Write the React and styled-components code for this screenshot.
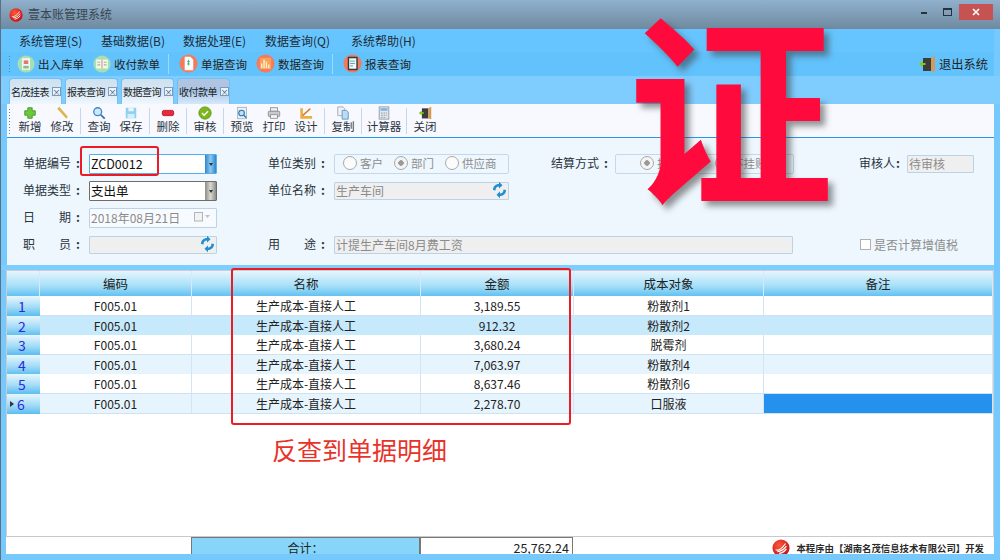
import styled, { createGlobalStyle } from 'styled-components';

const GlobalStyle = createGlobalStyle`
html, body {
  margin: 0;
  padding: 0;
  background: #6ac6fd;
}
* {
  box-sizing: border-box;
}
`;

const Window = styled.div`
position: relative;
width: 1000px;
height: 560px;
overflow: hidden;
display: flex;
flex-direction: column;
background: #75c9fd;
border-left: 1px solid #5d6f80;
font-family: "Noto Sans CJK SC", "Noto Sans", sans-serif;
font-size: 12px;
color: #222;
`;

const TitleBar = styled.div`
height: 29px;
flex: none;
display: flex;
align-items: center;
padding: 0 7px 0 8px;
background: linear-gradient(#8fb0cc, #6f8aa0);
`;
const TitleText = styled.div`
margin-left: 5px;
padding-bottom: 2px;
font-size: 12px;
color: #3a4650;
flex: 1;
`;
const WinButton = styled.div`
width: ${props => props.$wide ? '34px' : '23px'};
height: 16px;
display: flex;
align-items: center;
justify-content: center;
background: ${props => props.$wide ? '#c75252' : 'transparent'};
color: #fff;
margin-top: -5px;
`;

const MenuBar = styled.div`
height: 23px;
flex: none;
display: flex;
align-items: center;
padding-left: 18px;
margin-right: 6px;
background: #66c5fe;
font-size: 12px;
color: #1d2b36;
`;
const MenuItem = styled.div`
width: ${props => props.$w}px;
flex: none;
`;

const QuickBar = styled.div`
height: 24px;
flex: none;
display: flex;
align-items: center;
padding-left: 7px;
padding-bottom: 1px;
margin-right: 6px;
background: #62c2fc;
`;
const Grip = styled.div`
width: 3px;
height: ${props => props.$h || 18}px;
margin-right: ${props => props.$mr || 6}px;
background: radial-gradient(circle, #4d86b5 40%, transparent 45%) 0 0 / 3px 3px;
flex: none;
`;
const QuickItem = styled.div`
display: flex;
align-items: center;
gap: 3px;
margin-right: 9px;
font-size: 11.5px;
white-space: nowrap;
`;
const ExitItem = styled(QuickItem)`
margin-right: 6px;
font-size: 12.25px;
`;
const QuickSep = styled.div`
width: 1px;
height: 20px;
margin: 0 10px 0 -1px;
background: #9ed8fb;
`;
const QuickSpacer = styled.div`
flex: 1;
`;

const TabStrip = styled.div`
height: 28px;
flex: none;
display: flex;
align-items: flex-end;
gap: 3px;
padding-left: 8px;
background: #7fcdff;
`;
const Tab = styled.div`
width: 53px;
height: 26px;
display: flex;
align-items: center;
padding: 0 0 0 1px;
font-size: 10px;
letter-spacing: -0.5px;
white-space: nowrap;
border: 1px solid #6fc0f5;
border-bottom: none;
border-radius: 4px 4px 0 0;
background: ${props => props.$active
    ? 'linear-gradient(#b3c4de, #a9c6e6 45%, #d4e8fb)'
    : 'linear-gradient(#cfe0ef, #d6e8f6 50%, #f1f7fd)'};
`;
const TabClose = styled.span`
width: 9px;
height: 9px;
flex: none;
margin-left: 3px;
display: flex;
align-items: center;
justify-content: center;
border: 1px solid #7d9ab8;
background: #eaf3fb;
color: #33526e;
font-size: 8px;
letter-spacing: 0;
line-height: 1;
`;

const ActionBar = styled.div`
height: 33px;
flex: none;
margin: 0 6px 0 6px;
display: flex;
align-items: center;
padding-left: 1px;
background: #f7f9fe;
`;
const ActionButton = styled.div`
width: ${props => props.$w || 32}px;
height: 33px;
flex: none;
display: flex;
flex-direction: column;
align-items: center;
justify-content: flex-start;
padding-top: 2px;
font-size: 11.5px;
line-height: 12px;
color: #2b3440;
& > svg {
  width: 14px;
  height: 14px;
  flex: none;
}
`;
const ActionSep = styled.div`
width: 1px;
height: 26px;
margin: 0 2px;
flex: none;
background: #c5d8ea;
`;

const FormPanel = styled.div`
height: 128px;
flex: none;
margin: 0 6px;
padding: 12px 0 0 16px;
border-top: 1px solid #2a94ee;
background: #eef7fe;
display: grid;
grid-template-columns: 245px 283px 308px 1fr;
grid-auto-rows: 27px;
`;
const Field = styled.div`
display: flex;
align-items: center;
grid-column: ${props => props.$span ? `span ${props.$span}` : 'auto'};
`;
const Label = styled.div`
width: ${props => props.$w || 66}px;
flex: none;
padding-bottom: 2px;
font-size: 12px;
color: #2a333c;
display: flex;
white-space: nowrap;
&::after {
  content: ":";
  margin-left: ${props => props.$colon ?? 5}px;
  font-weight: 700;
}
`;
const LabelText = styled.div`
width: ${props => props.$w || 48}px;
display: flex;
justify-content: space-between;
`;
const Input = styled.div`
width: ${props => props.$w}px;
height: ${props => props.$h || 20}px;
flex: none;
display: flex;
align-items: center;
justify-content: space-between;
padding: 0 0 1px 1px;
font-size: ${props => props.$size || 12}px;
color: ${props => props.$active ? '#111' : '#8b8b8b'};
background: ${props => props.$active ? '#fff' : props.$plain ? '#f7fbff' : '#efefef'};
border: 1px solid ${props => props.$dark ? '#6d6d6d' : props.$blue ? '#58aeea' : '#bcd2e6'};
border-radius: 1px;
white-space: nowrap;
`;
const DropArrow = styled.div`
width: 11px;
align-self: stretch;
margin-bottom: -1px;
flex: none;
display: flex;
align-items: center;
justify-content: center;
background: ${props => props.$gray
    ? 'linear-gradient(90deg, #8d8d85, #d8d8d0 50%, #8d8d85)'
    : 'linear-gradient(90deg, #2d86c8, #8cc8f0 50%, #2d86c8)'};
&::after {
  content: "";
  border: 2.5px solid transparent;
  border-top: 3px solid #1c3850;
  margin-top: 3px;
}
`;
const RadioBox = styled.div`
width: ${props => props.$w}px;
height: 20px;
flex: none;
display: flex;
align-items: center;
gap: ${props => props.$gap}px;
padding-left: ${props => props.$pl}px;
padding-bottom: 1px;
border: 1px solid #c3d8ea;
border-radius: 2px;
font-size: 11.5px;
color: #8d8d8d;
`;
const Radio = styled.div`
display: flex;
align-items: center;
gap: 3px;
white-space: nowrap;
&::before {
  content: "";
  width: 12px;
  height: 12px;
  border-radius: 50%;
  border: 1px solid #a9a9a9;
  background: ${props => props.$on ? 'radial-gradient(circle, #9a9a9a 2.5px, #f4f4f4 3px)' : '#fbfbfb'};
}
`;
const CheckRow = styled.div`
display: flex;
align-items: center;
gap: 3px;
padding: 0 0 1px 1px;
color: #8d8d8d;
font-size: 12px;
`;
const CheckBox = styled.span`
width: 11px;
height: 11px;
border: 1px solid #b0b0b0;
background: #fff;
`;

const Splitter = styled.div`
height: 5px;
flex: none;
margin-right: 6px;
background: #7fcdff;
`;

const GridWrap = styled.div`
height: 266px;
flex: none;
margin: 0 6px 0 5px;
display: flex;
flex-direction: column;
background: #fff;
border: 1px solid #c8cdd6;
border-bottom: none;
`;
const Row = styled.div`
display: grid;
grid-template-columns: 33px 152px 229px 153px 190px 1fr;
height: ${props => props.$head ? '25px' : '19.5px'};
flex: none;
font-size: ${props => props.$head ? 12.5 : 12}px;
color: #222;
background: ${props => props.$bg || 'transparent'};
`;
const HeadCell = styled.div`
display: flex;
align-items: center;
justify-content: center;
background: linear-gradient(#e6f6fd, #a6dff8 60%, #62c2f2);
border-right: 1px solid #d3eafa;
`;
const Cell = styled.div`
display: flex;
align-items: center;
justify-content: center;
border-right: 1px solid #d3e4f4;
border-bottom: 1px solid #cfe2f4;
background: ${props => props.$selected ? '#2491ee' : 'transparent'};
white-space: nowrap;
`;
const RowNum = styled.div`
display: flex;
align-items: center;
padding-left: 11px;
font-size: 14px;
color: #2a2be0;
background: linear-gradient(#e8f7fd, #a4dcf7 55%, #5bbdf0);
`;
const RowPointer = styled.span`
width: 0;
height: 0;
margin: 0 3px 0 -8px;
border: 3px solid transparent;
border-left: 4px solid #333;
border-right: none;
`;

const Footer = styled.div`
height: 18px;
flex: none;
margin: 0 6px 0 5px;
display: grid;
grid-template-columns: 185px 229px 153px 1fr;
background: #fff;
border-top: 1px solid #c8c8d0;
`;
const FootCell = styled.div`
display: flex;
align-items: center;
justify-content: ${props => props.$end ? 'flex-end' : 'center'};
padding-right: ${props => props.$end ? '3px' : '0'};
background: ${props => props.$fill ? '#87d6fa' : '#fff'};
border: ${props => props.$box ? '1px solid #777' : 'none'};
border-bottom: ${props => props.$box ? '1px solid #bbb' : 'none'};
font-size: ${props => props.$end ? 12.5 : 12}px;
`;
const Credit = styled.div`
display: flex;
align-items: center;
justify-content: flex-end;
gap: 6px;
padding-right: 10px;
font-family: "Liberation Serif", "Noto Sans CJK SC", serif;
font-size: 9.4px;
font-weight: 700;
white-space: nowrap;
color: #2a2a2a;
`;

const BottomFill = styled.div`
flex: 1;
background: #75c9fd;
`;

const BigChar = styled.div`
position: absolute;
left: 625px;
top: 0;
width: 210px;
text-align: center;
font-size: 206px;
line-height: 200px;
font-weight: 700;
color: #ff0a3c;
text-shadow: 5px 5px 6px rgba(60, 60, 60, 0.55);
`;
const RedBox = styled.div`
position: absolute;
left: ${props => props.$x}px;
top: ${props => props.$y}px;
width: ${props => props.$w}px;
height: ${props => props.$h}px;
border: 2px solid #ec1c24;
border-radius: 3px;
`;
const Note = styled.div`
position: absolute;
left: 271px;
top: 431px;
font-size: 25px;
line-height: 36px;
color: #e8332a;
white-space: nowrap;
`;

const Logo = ({ size = 18 }) => (
  <svg width={size} height={size} viewBox="0 0 20 20">
    <defs>
      <radialGradient id="lg" cx="40%" cy="35%" r="70%">
        <stop offset="0" stopColor="#ff5a3c" />
        <stop offset="1" stopColor="#c40d12" />
      </radialGradient>
    </defs>
    <circle cx="10" cy="10" r="9.5" fill="url(#lg)" />
    <path d="M4 12c3 1 7-1 11-7M6 14c3 0 7-2 10-6M8 16c3-.5 6-2 8-5" stroke="#fff" strokeWidth="1.3" fill="none" />
  </svg>
);

const Quick = ({ kind }) => {
  const green = kind === 'stock' || kind === 'pay';
  const size = green ? 18 : 19;
  return (
    <svg width={size} height={size} viewBox="0 0 20 20">
      <circle cx="10" cy="10" r="9.5" fill={green ? '#a6dfb2' : '#f47a5c'} />
      {kind === 'stock' && <>
        <rect x="5.5" y="3.5" width="9" height="13" fill="#f2f4f2" />
        <rect x="7.5" y="6" width="5" height="4" fill="#e2786a" />
        <rect x="7" y="12" width="6" height="3" fill="#7fc28f" />
      </>}
      {kind === 'pay' && <>
        <rect x="3.5" y="5" width="13" height="10" fill="#f6f6ea" />
        <rect x="9.5" y="5" width="1" height="10" fill="#e2786a" />
        <path d="M5 8h3M5 11h3M12 8h3M12 11h3" stroke="#7fc28f" strokeWidth="1.2" />
      </>}
      {kind === 'doc' && <>
        <path d="M6 3h6l3 3v11H6z" fill="#fbfdfb" />
        <path d="M10 6v6M8.5 8h3M8.5 10.5h3" stroke="#3fb58a" strokeWidth="1" />
      </>}
      {kind === 'bars' && <>
        <rect x="4" y="4" width="12" height="12" fill="#f9a05a" />
        <path d="M6 15V10M8.5 15V6M11 15V8M13.5 15V11" stroke="#fff3d0" strokeWidth="1.4" />
      </>}
      {kind === 'report' && <>
        <rect x="5" y="3" width="10.5" height="14" rx="1" fill="#2c3c48" />
        <rect x="6.5" y="4.5" width="7.5" height="11" fill="#f4f8f6" />
        <path d="M7.5 7.5h5M7.5 10h5M7.5 12.5h3" stroke="#4aa7a0" strokeWidth="1" />
      </>}
    </svg>
  );
};

const Door = ({ size = 18 }) => (
  <svg width={size} height={size} viewBox="0 0 18 18">
    <rect x="5" y="3" width="8" height="13" fill="#3c3c3c" />
    <path d="M13 3l4-2v16l-4-1z" fill="#d39a5a" />
    <path d="M1 9l3.500-3v2h3v2h-3v2z" fill="#86c814" />
  </svg>
);

const ActionIcon = ({ kind }) => {
  switch (kind) {
    case 'add':
      return <svg viewBox="0 0 16 16"><path d="M5.500 2h5v3.500H14v5h-3.500V14h-5v-3.500H2v-5h3.500z" fill="#6cc83c" stroke="#3d962a" /></svg>;
    case 'edit':
      return <svg viewBox="0 0 16 16"><path d="M3 3l2-1.500L14 12l-1 2z" fill="#e8b93c" stroke="#b88a2a" strokeWidth=".5" /></svg>;
    case 'find':
      return <svg viewBox="0 0 16 16"><circle cx="6.500" cy="6.500" r="4.500" fill="#cfe9fb" stroke="#3f86c8" strokeWidth="1.500" /><path d="M10 10l4.500 4.500" stroke="#2f6fb0" strokeWidth="2" /></svg>;
    case 'save':
      return <svg viewBox="0 0 16 16"><path d="M2 2h12v12H2z" fill="#8fd0f0" /><rect x="5" y="2" width="6" height="4" fill="#e8f6fc" /><rect x="4" y="9" width="8" height="5" fill="#d4eefa" /></svg>;
    case 'del':
      return <svg viewBox="0 0 16 16"><rect x="1.500" y="5" width="13" height="6" rx="2" fill="#e8283c" stroke="#b81c2c" /></svg>;
    case 'check':
      return <svg viewBox="0 0 16 16"><circle cx="8" cy="8" r="7" fill="#7cb81c" stroke="#5a9410" /><path d="M4.500 8l2.500 2.500 4.500-4.500" stroke="#fff" strokeWidth="1.600" fill="none" /></svg>;
    case 'preview':
      return <svg viewBox="0 0 16 16"><rect x="3" y="1.500" width="10" height="13" fill="#eef2f6" stroke="#a4b0bc" /><circle cx="7.500" cy="8" r="3.200" fill="#bfe0f5" stroke="#2f78b8" strokeWidth="1.300" /><path d="M10 10.500l3 3" stroke="#2f78b8" strokeWidth="1.600" /></svg>;
    case 'print':
      return <svg viewBox="0 0 16 16"><rect x="4" y="2" width="8" height="4" fill="#f4f4f4" stroke="#8c8c8c" /><rect x="1.500" y="6" width="13" height="6" rx="1" fill="#c8ccd0" stroke="#8c8c8c" /><rect x="4" y="10" width="8" height="4" fill="#fafafa" stroke="#8c8c8c" /></svg>;
    case 'design':
      return <svg viewBox="0 0 16 16"><path d="M1.500 14.500V2.500l3 0V11.500H15v3z" fill="#e8b040" /><path d="M4 11L13 3" stroke="#d87a28" strokeWidth="1.600" /></svg>;
    case 'copy':
      return <svg viewBox="0 0 16 16"><path d="M2 1h6l2 2v8H2z" fill="#eef2f6" stroke="#9aa8b4" /><path d="M7 5h5l2 2v8H7z" fill="#bcdcf4" stroke="#5c94c4" /></svg>;
    case 'calc':
      return <svg viewBox="0 0 16 16"><rect x="2.500" y="1" width="11" height="14" fill="#e4e8ec" stroke="#8c98a4" /><rect x="4" y="2.500" width="8" height="3" fill="#7fb4dc" /><path d="M4.500 8h2M7.500 8h2M10.500 8h1M4.500 10.500h2M7.500 10.500h2M10.500 10.500h1M4.500 13h2M7.500 13h2" stroke="#8c98a4" /></svg>;
    default:
      return <Door />;
  }
};

const menus = [
  ['系统管理(S)', 82], ['基础数据(B)', 82], ['数据处理(E)', 82], ['数据查询(Q)', 86], ['系统帮助(H)', 80],
];
const tabs = ['名茂挂表', '报表查询', '数据查询', '收付款单'];
const actions = [
  ['add', '新增'], ['edit', '修改'], null,
  ['find', '查询'], ['save', '保存'], null,
  ['del', '删除'], null,
  ['check', '审核'], null,
  ['preview', '预览'], ['print', '打印'], ['design', '设计'], null,
  ['copy', '复制'], null,
  ['calc', '计算器', 40], null,
  ['door', '关闭'],
];
const rows = [
  ['3,189.55', '粉散剂1'],
  ['912.32', '粉散剂2'],
  ['3,680.24', '脱霉剂'],
  ['7,063.97', '粉散剂4'],
  ['8,637.46', '粉散剂6'],
  ['2,278.70', '口服液'],
];
const rowBg = ['#fff', '#c6e9fb', '#fff', '#e6f5fd', '#fff', '#e6f5fd'];

const Refresh = () => (
  <svg width="17" height="18" viewBox="0 0 17 18" style={{ flex: 'none' }}>
    <path d="M2 9c0-3.500 2.500-6 6-6V.8l3.500 3.400L8 7.600V5.500C5.800 5.500 4.500 7 4.500 9.500z" fill="#1f8fd0" />
    <path d="M15 9c0 3.500-2.500 6-6 6v2.200l-3.500-3.400L9 10.400v2.100c2.200 0 3.500-1.500 3.500-4z" fill="#1f8fd0" />
  </svg>
);

const DateIcon = () => (
  <svg width="17" height="10" viewBox="0 0 17 10" style={{ marginRight: 5 }}>
    <rect x=".5" y=".5" width="8" height="8.500" fill="#f2f2f2" stroke="#b5b5b5" />
    <path d="M11 3h5l-2.500 3z" fill="#c0c0c0" />
  </svg>
);

const ActionButtons = () => actions.map((a, i) => a
  ? (
    <ActionButton key={a[1]} $w={a[2]}>
      <ActionIcon kind={a[0]} />
      {a[1]}
    </ActionButton>
  )
  : <ActionSep key={i} />);

function App() {
  return (
    <Window>
      <GlobalStyle />
      <TitleBar>
        <Logo size={14} />
        <TitleText>壹本账管理系统</TitleText>
        <WinButton>
          <svg width="8" height="3"><rect width="6" height="2" y="1" fill="#26323c" /></svg>
        </WinButton>
        <WinButton>
          <svg width="9" height="8"><rect x=".5" y=".5" width="8" height="7" fill="none" stroke="#26323c" /><rect x="0" y="0" width="9" height="2" fill="#26323c" /></svg>
        </WinButton>
        <WinButton $wide>
          <svg width="8" height="8"><path d="M1 1l6 6M7 1l-6 6" stroke="#fff" strokeWidth="1.6" /></svg>
        </WinButton>
      </TitleBar>

      <MenuBar>
        {menus.map(([m, w]) => <MenuItem key={m} $w={w}>{m}</MenuItem>)}
      </MenuBar>

      <QuickBar>
        <Grip />
        <QuickItem><Quick kind="stock" />出入库单</QuickItem>
        <QuickItem><Quick kind="pay" />收付款单</QuickItem>
        <QuickSep />
        <QuickItem><Quick kind="doc" />单据查询</QuickItem>
        <QuickItem><Quick kind="bars" />数据查询</QuickItem>
        <QuickSep />
        <QuickItem><Quick kind="report" />报表查询</QuickItem>
        <QuickSpacer />
        <ExitItem><Door />退出系统</ExitItem>
      </QuickBar>

      <TabStrip>
        {tabs.map((t, i) => (
          <Tab key={t} $active={i === 3}>{t}<TabClose>×</TabClose></Tab>
        ))}
      </TabStrip>

      <ActionBar>
        <Grip $h={26} $mr={3} />
        <ActionButtons />
      </ActionBar>

      <FormPanel>
        <Field>
          <Label><LabelText>单据编号</LabelText></Label>
          <Input $w={128} $active $blue $size={12.5}>ZCD0012<DropArrow /></Input>
        </Field>
        <Field>
          <Label><LabelText>单位类别</LabelText></Label>
          <RadioBox $w={175} $gap={11} $pl={8}>
            <Radio>客户</Radio><Radio $on>部门</Radio><Radio>供应商</Radio>
          </RadioBox>
        </Field>
        <Field>
          <Label $w={64}><LabelText>结算方式</LabelText></Label>
          <RadioBox $w={179} $gap={35} $pl={24}>
            <Radio $on>挂账</Radio><Radio>不挂账</Radio>
          </RadioBox>
        </Field>
        <Field>
          <Label $w={48} $colon={1}><LabelText $w={36}>审核人</LabelText></Label>
          <Input $w={67} $h={18}>待审核</Input>
        </Field>

        <Field>
          <Label><LabelText>单据类型</LabelText></Label>
          <Input $w={128} $active $dark $size={12.5}>支出单<DropArrow $gray /></Input>
        </Field>
        <Field $span={3}>
          <Label><LabelText>单位名称</LabelText></Label>
          <Input $w={175} $h={18}>生产车间<Refresh /></Input>
        </Field>

        <Field $span={4}>
          <Label><LabelText><span>日</span><span>期</span></LabelText></Label>
          <Input $w={128} $plain>2018年08月21日<DateIcon /></Input>
        </Field>

        <Field>
          <Label><LabelText><span>职</span><span>员</span></LabelText></Label>
          <Input $w={128} $h={18}><span /><Refresh /></Input>
        </Field>
        <Field $span={2}>
          <Label><LabelText><span>用</span><span>途</span></LabelText></Label>
          <Input $w={459} $h={18}>计提生产车间8月费工资</Input>
        </Field>
        <Field>
          <CheckRow><CheckBox />是否计算增值税</CheckRow>
        </Field>
      </FormPanel>

      <Splitter />

      <GridWrap>
        <Row $head>
          <HeadCell /><HeadCell>编码</HeadCell><HeadCell>名称</HeadCell>
          <HeadCell>金额</HeadCell><HeadCell>成本对象</HeadCell><HeadCell>备注</HeadCell>
        </Row>
        {rows.map(([amount, target], i) => (
          <Row key={i} $bg={rowBg[i]}>
            <RowNum>{i === 5 && <RowPointer />}{i + 1}</RowNum>
            <Cell>F005.01</Cell>
            <Cell>生产成本-直接人工</Cell>
            <Cell>{amount}</Cell>
            <Cell>{target}</Cell>
            <Cell $selected={i === 5} />
          </Row>
        ))}
      </GridWrap>

      <Footer>
        <FootCell />
        <FootCell $fill $box>合计：</FootCell>
        <FootCell $box $end>25,762.24</FootCell>
        <Credit><Logo size={18} />本程序由【湖南名茂信息技术有限公司】开发</Credit>
      </Footer>
      <BottomFill />

      <RedBox $x={79} $y={146} $w={79} $h={30} />
      <RedBox $x={230} $y={268} $w={340} $h={157} />
      <Note>反查到单据明细</Note>
      <BigChar>证</BigChar>
    </Window>
  );
}

export default App;
